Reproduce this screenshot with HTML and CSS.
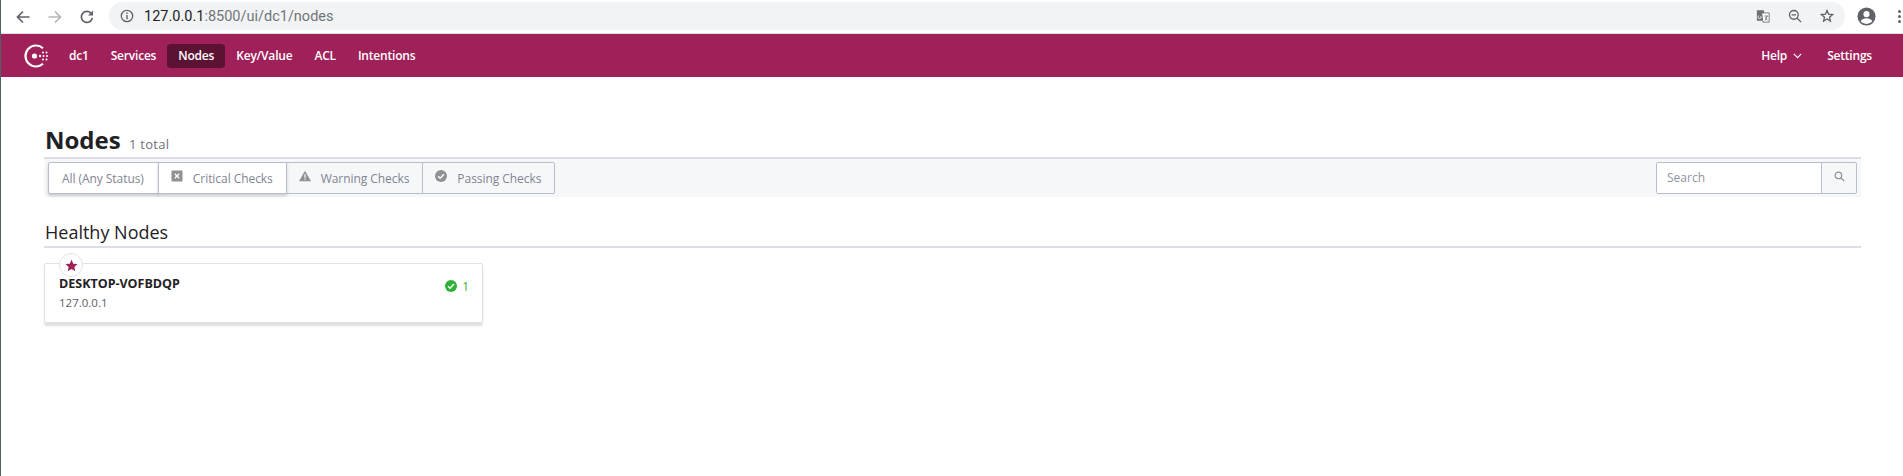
FILE: index.html
```html
<!DOCTYPE HTML>
<html>
<head>
<title>Nodes</title>
<link rel="stylesheet" href="styles.css">
</head>
<body>
<div class="browser-bar">
    <svg class="tool-icon" viewBox="0 0 16 16"><path d="M14.5 8H3M8 2.5 2.5 8 8 13.5" fill="none" stroke="#5f6368" stroke-width="1.7"/></svg>
    <svg class="tool-icon" viewBox="0 0 16 16"><path d="M1.5 8H13M8 2.5 13.500 8 8 13.500" fill="none" stroke="#b4b6b9" stroke-width="1.7"/></svg>
    <svg class="tool-icon" viewBox="0 0 16 16"><path d="M13.300 8.800A5.500 5.500 0 1 1 11.900 4.100" fill="none" stroke="#5f6368" stroke-width="1.700"/><path d="M14 1.500V6.500H9Z" fill="#5f6368"/></svg>
    <div class="omnibox">
        <svg class="info-icon" viewBox="0 0 14 14"><circle cx="7" cy="7" r="5.700" fill="none" stroke="#5f6368" stroke-width="1.300"/><path d="M6.300 6h1.400v4.300H6.300zM6.300 3.500h1.400v1.400H6.300z" fill="#5f6368"/></svg>
        <span class="url"><span class="url-host">127.0.0.1</span>:8500/ui/dc1/nodes</span>
        <span class="omni-right">
            <svg class="omni-icon" viewBox="0 0 16 16"><path d="M1 1.500h8l1 12H1z" fill="#6d7175"/><path d="M6.500 4.500h8.500V15H8z" fill="#fff" stroke="#6d7175"/><path d="M3.200 7.500a1.900 1.900 0 1 0 3 1.500H4.800" fill="none" stroke="#fff"/><path d="M9.500 8h4.500M10.500 13 13 8M10.500 9.500 13 13" fill="none" stroke="#6d7175"/></svg>
            <svg class="omni-icon" viewBox="0 0 16 16"><circle cx="6.700" cy="6.700" r="5" fill="none" stroke="#5f6368" stroke-width="1.500"/><path d="M10.500 10.500 15 15M4.200 6.700h5" stroke="#5f6368" stroke-width="1.500"/></svg>
            <svg class="omni-icon" viewBox="0 0 16 16"><path d="M8 1.800 9.800 6l4.600.4-3.500 3 1 4.500L8 11.500l-3.900 2.400 1-4.500-3.500-3L6.200 6z" fill="none" stroke="#5f6368" stroke-width="1.500"/></svg>
        </span>
    </div>
    <svg class="avatar" viewBox="0 0 20 20"><circle cx="10" cy="10" r="9.500" fill="#5f6368"/><circle cx="10" cy="7.500" r="3.200" fill="#fff"/><path d="M3.800 15c1.500-2.500 4-3.200 6.200-3.200s4.700.7 6.200 3.200a8 8 0 0 1-12.400 0z" fill="#fff"/></svg>
    <span class="menu-dots"><i></i><i></i><i></i></span>
</div>

<nav class="main-nav">
    <svg class="logo" viewBox="0 0 26 26">
        <path d="M20 20.800A10.500 10.500 0 1 1 20 5.200" fill="none" stroke="#fff" stroke-width="2.200"/>
        <circle cx="11.500" cy="13" r="2.600" fill="#fff"/>
        <circle cx="17" cy="13" r="1.200" fill="#fff"/>
        <circle cx="20" cy="9.500" r="1" fill="#fff"/><circle cx="23.500" cy="9.500" r="1" fill="#fff"/>
        <circle cx="20.500" cy="13" r="1" fill="#fff"/><circle cx="24" cy="13" r="1" fill="#fff"/>
        <circle cx="20" cy="16.500" r="1" fill="#fff"/><circle cx="23.500" cy="16.500" r="1" fill="#fff"/>
    </svg>
    <a class="nav-item">dc1</a>
    <a class="nav-item">Services</a>
    <a class="nav-item selected">Nodes</a>
    <a class="nav-item">Key/Value</a>
    <a class="nav-item">ACL</a>
    <a class="nav-item">Intentions</a>
    <span class="nav-spacer"></span>
    <a class="nav-item help-item">Help <svg class="chevron" viewBox="0 0 8 5"><path d="M.7.700 4 4 7.300.700" fill="none" stroke="#fff" stroke-width="1"/></svg></a>
    <a class="nav-item">Settings</a>
</nav>

<main class="content">
    <h1 class="page-title">Nodes <small>1 total</small></h1>

    <div class="filter-bar">
        <div class="status-tabs">
            <div class="status-tab active">All (Any Status)</div>
            <div class="status-tab active">
                <svg class="tab-icon" viewBox="0 0 12 12"><rect x=".5" y=".5" width="11" height="11" rx="1" fill="#8f9194"/><path d="M3.800 3.800l4.400 4.400M8.200 3.800 3.800 8.200" stroke="#fff" stroke-width="1.300"/></svg>
                Critical Checks
            </div>
            <div class="status-tab">
                <svg class="tab-icon" viewBox="0 0 12 12"><path d="M6 .8 12 11.200H0z" fill="#8f9194"/><path d="M5.400 4.300h1.200v3.500H5.400zM5.400 8.500h1.200v1.200H5.400z" fill="#fff"/></svg>
                Warning Checks
            </div>
            <div class="status-tab">
                <svg class="tab-icon" viewBox="0 0 12 12"><circle cx="6" cy="6" r="6" fill="#8f9194"/><path d="M3.200 6.200 5.200 8.200 8.900 4.200" fill="none" stroke="#fff" stroke-width="1.500"/></svg>
                Passing Checks
            </div>
        </div>
        <div class="search-box">
            <span class="search-input">Search</span>
            <span class="search-button"><svg viewBox="0 0 12 12"><circle cx="4.800" cy="4.800" r="3.600" fill="none" stroke="#8f9194" stroke-width="1.300"/><path d="M7.500 7.500 11 11" stroke="#8f9194" stroke-width="1.500"/></svg></span>
        </div>
    </div>

    <h2 class="section-title">Healthy Nodes</h2>

    <div class="node-card">
        <span class="leader-badge"><svg viewBox="0 0 14 14"><path d="M7 .8 8.900 5l4.600.5-3.400 3.100.9 4.600L7 10.900l-4 2.300.9-4.600L.5 5.500 5.100 5z" fill="#a0215a"/></svg></span>
        <div class="node-info">
            <div class="node-name">DESKTOP-VOFBDQP</div>
            <div class="node-address">127.0.0.1</div>
        </div>
        <div class="node-health">
            <svg viewBox="0 0 12 12"><circle cx="6" cy="6" r="6" fill="#2eb039"/><path d="M3 6.200 5.100 8.200 9 4" fill="none" stroke="#fff" stroke-width="1.500"/></svg>
            1
        </div>
    </div>
</main>
</body>
</html>
```

FILE: styles.css
```css
body {
    margin: 0;
    font-family: "Open Sans", "Noto Sans", sans-serif;
    background: #fff;
    height: 476px;
    overflow: hidden;
    border-left: 1px solid #54605f;
    box-sizing: border-box;
}

.browser-bar {
    display: flex;
    align-items: center;
    height: 33px;
    padding-left: 14px;
    background: #fff;
    border-bottom: 1px solid #dfe1e5;
}

.tool-icon {
    width: 16px;
    height: 16px;
    margin-right: 16px;
}

.omnibox {
    display: flex;
    align-items: center;
    width: 1736px;
    height: 28px;
    margin: -1px 0 0 -2px;
    padding-left: 11px;
    box-sizing: border-box;
    background: #f1f3f4;
    border-radius: 14px;
    font-family: "Roboto", sans-serif;
}

.info-icon {
    width: 14px;
    height: 14px;
    margin-right: 10px;
}

.url {
    font-size: 14.5px;
    color: #70757a;
}

.url-host {
    color: #202124;
}

.omni-right {
    display: flex;
    gap: 18px;
    align-items: center;
    margin-left: auto;
    margin-right: 11px;
}

.omni-icon {
    width: 14px;
    height: 14px;
}

.avatar {
    width: 19px;
    height: 19px;
    margin-left: 12px;
}

.menu-dots {
    display: flex;
    flex-direction: column;
    gap: 2px;
    margin-left: 22px;
}

.menu-dots i {
    width: 3px;
    height: 3px;
    background: #5f6368;
    border-radius: 50%;
}

.main-nav {
    display: flex;
    align-items: center;
    height: 43px;
    padding: 0 20px 0 22px;
    background: #a0215a;
}

.logo {
    width: 26px;
    height: 26px;
    margin-right: 9px;
}

.nav-item {
    display: flex;
    align-items: center;
    height: 24px;
    padding: 0 11px;
    border-radius: 4px;
    color: #fff;
    font-size: 12px;
    font-weight: 600;
    letter-spacing: -.2px;
}

.nav-item.selected {
    background: #5c1233;
}

.nav-spacer {
    flex: 1;
}

.help-item {
    margin-right: 3px;
}

.chevron {
    width: 9px;
    height: 6px;
    margin-left: 6px;
}

.content {
    padding: 0 42px 0 43px;
}

.page-title {
    margin: 48px 0 0;
    padding-left: 1px;
    height: 32px;
    line-height: 29px;
    font-size: 24px;
    font-weight: 700;
    color: #1f2124;
    border-bottom: 2px solid #dbdee6;
}

.page-title small {
    margin-left: 2px;
    font-size: 13px;
    font-weight: 400;
    letter-spacing: .3px;
    color: #6f7178;
}

.filter-bar {
    display: flex;
    justify-content: space-between;
    align-items: center;
    height: 38px;
    padding: 0 4px;
    background: #f6f7f9;
}

.status-tabs {
    display: flex;
}

.status-tab {
    display: flex;
    align-items: center;
    height: 30px;
    padding: 0 13px 0 12px;
    border: 1px solid #b7bdcc;
    margin-left: -1px;
    font-size: 12px;
    letter-spacing: -.06px;
    color: #7f8592;
}

.status-tab:first-child {
    margin-left: 0;
    padding: 0 14px 0 13px;
    border-radius: 2px 0 0 2px;
}

.status-tab:last-child {
    border-radius: 0 2px 2px 0;
}

.status-tab.active {
    background: #fff;
    box-shadow: 0 2px 3px rgba(31, 33, 36, .2);
}

.tab-icon {
    width: 12px;
    height: 12px;
    margin-right: 10px;
    margin-top: -5px;
}

.search-box {
    display: flex;
    width: 201px;
    height: 32px;
    border: 1px solid #b7bdcc;
    border-radius: 2px;
    box-sizing: border-box;
}

.search-input {
    flex: 1;
    padding-left: 10px;
    background: #fff;
    font-size: 12px;
    line-height: 30px;
    color: #8f949e;
}

.search-button {
    display: flex;
    align-items: center;
    justify-content: center;
    width: 34px;
    border-left: 1px solid #b7bdcc;
}

.search-button svg {
    width: 11px;
    height: 11px;
    margin-top: -3px;
}

.section-title {
    margin: 23px 0 0;
    padding-left: 1px;
    height: 26px;
    line-height: 24px;
    font-size: 18px;
    font-weight: 500;
    color: #1f2124;
    border-bottom: 2px solid #dbdee6;
}

.node-card {
    position: relative;
    display: flex;
    justify-content: space-between;
    width: 439px;
    height: 60px;
    margin-top: 15px;
    padding: 12px 13px 0 14px;
    box-sizing: border-box;
    border: 1px solid #e0e2e8;
    border-radius: 2px;
    box-shadow: 0 3px 2px rgba(31, 33, 36, .14);
}

.leader-badge {
    position: absolute;
    top: -11px;
    left: 14px;
    display: flex;
    align-items: center;
    justify-content: center;
    width: 24px;
    height: 24px;
    background: #fff;
    border: 1px solid #e0e2e8;
    border-radius: 50%;
    box-sizing: border-box;
}

.leader-badge svg {
    width: 13px;
    height: 13px;
}

.node-name {
    font-size: 12.5px;
    font-weight: 700;
    line-height: 16px;
    color: #1f2124;
}

.node-address {
    margin-top: 3px;
    font-size: 11.5px;
    line-height: 16px;
    color: #5b5e66;
}

.node-health {
    display: flex;
    align-items: center;
    gap: 5px;
    height: 20px;
    font-size: 12px;
    color: #2eb039;
}

.node-health svg {
    width: 12px;
    height: 12px;
}
```
